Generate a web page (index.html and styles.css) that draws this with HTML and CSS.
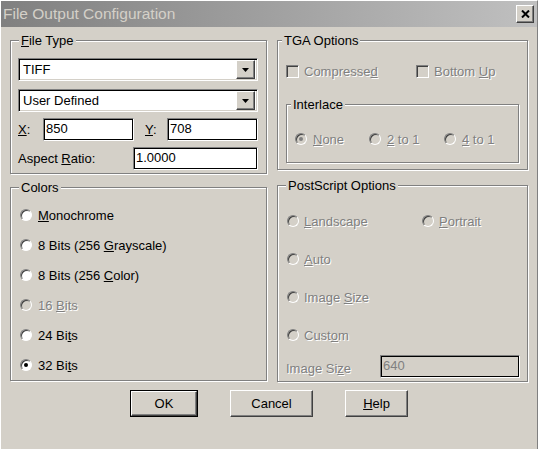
FILE: index.html
```html
<!DOCTYPE html>
<html>
<head>
<meta charset="utf-8">
<link rel="stylesheet" href="styles.css">
</head>
<body>
<div class="window">
  <div class="titlebar">
    <span class="title">File Output Configuration</span>
    <span class="close"><svg width="9" height="8" viewBox="0 0 9 8"><path d="M1 0.5 L8 7.5 M8 0.5 L1 7.5" stroke="#000" stroke-width="2"/></svg></span>
  </div>
  <div class="content">
    <div class="columns">
      <div class="col col-left">
        <div class="group filetype">
          <div class="legend"><u>F</u>ile Type</div>
          <div class="combo first"><span class="combo-text">TIFF</span><span class="combo-btn"><svg width="7" height="4" viewBox="0 0 7 4"><path d="M0 0H7L3.5 4Z" fill="#000"/></svg></span></div>
          <div class="combo second"><span class="combo-text">User Defined</span><span class="combo-btn"><svg width="7" height="4" viewBox="0 0 7 4"><path d="M0 0H7L3.5 4Z" fill="#000"/></svg></span></div>
          <div class="row xy">
            <span class="lbl lbl-x"><u>X</u>:</span>
            <span class="edit w91">850</span>
            <span class="lbl lbl-y"><u>Y</u>:</span>
            <span class="edit w91">708</span>
          </div>
          <div class="row aspect">
            <span class="lbl lbl-aspect">Aspect <u>R</u>atio:</span>
            <span class="edit w125">1.0000</span>
          </div>
        </div>
        <div class="group colors">
          <div class="legend">Colors</div>
          <div class="radio-list">
            <div class="ritem"><span class="radio"></span><span><u>M</u>onochrome</span></div>
            <div class="ritem"><span class="radio"></span><span>8 Bits (256 <u>G</u>rayscale)</span></div>
            <div class="ritem"><span class="radio"></span><span>8 Bits (256 <u>C</u>olor)</span></div>
            <div class="ritem disabled"><span class="radio"></span><span>16 <u>B</u>its</span></div>
            <div class="ritem"><span class="radio"></span><span>24 Bi<u>t</u>s</span></div>
            <div class="ritem"><span class="radio checked"></span><span>32 Bi<u>t</u>s</span></div>
          </div>
        </div>
      </div>
      <div class="col col-right">
        <div class="group tga">
          <div class="legend">TGA Options</div>
          <div class="check-row">
            <div class="citem c1 disabled"><span class="checkbox"></span><span>Compresse<u>d</u></span></div>
            <div class="citem disabled"><span class="checkbox"></span><span>Bottom <u>U</u>p</span></div>
          </div>
          <div class="group interlace">
            <div class="legend">Interlace</div>
            <div class="interlace-row">
              <div class="ritem disabled i1"><span class="radio checked"></span><span><u>N</u>one</span></div>
              <div class="ritem disabled i2"><span class="radio"></span><span><u>2</u> to 1</span></div>
              <div class="ritem disabled"><span class="radio"></span><span><u>4</u> to 1</span></div>
            </div>
          </div>
        </div>
        <div class="group ps">
          <div class="legend">PostScript Options</div>
          <div class="ps-list">
            <div class="ps-row">
              <div class="ritem disabled p1"><span class="radio"></span><span><u>L</u>andscape</span></div>
              <div class="ritem disabled"><span class="radio"></span><span><u>P</u>ortrait</span></div>
            </div>
            <div class="ps-row">
              <div class="ritem disabled"><span class="radio"></span><span><u>A</u>uto</span></div>
            </div>
            <div class="ps-row">
              <div class="ritem disabled"><span class="radio"></span><span>Image <u>S</u>ize</span></div>
            </div>
            <div class="ps-row">
              <div class="ritem disabled"><span class="radio"></span><span>Cust<u>o</u>m</span></div>
            </div>
          </div>
          <div class="row imgsize">
            <span class="lbl lbl-img disabled-text">Image Si<u>z</u>e</span>
            <span class="edit w140 edit-disabled">640</span>
          </div>
        </div>
      </div>
    </div>
    <div class="buttons">
      <div class="btn default"><span class="btn-inner">OK</span></div>
      <div class="btn cancel"><span class="btn-inner">Cancel</span></div>
      <div class="btn help"><span class="btn-inner"><u>H</u>elp</span></div>
    </div>
  </div>
</div>
</body>
</html>
```

FILE: styles.css
```css
* { box-sizing: border-box; }
html, body { margin: 0; padding: 0; }
body {
  width: 538px;
  height: 449px;
  overflow: hidden;
  background: #d4d0c8;
  font-family: "Liberation Sans", Arial, sans-serif;
  font-size: 13px;
  color: #000;
}
u { text-decoration: underline; text-underline-offset: 1px; }

.window {
  width: 538px;
  height: 449px;
  background: #d4d0c8;
  border-top: 1px solid #fff;
  border-left: 1px solid #fff;
  border-right: 1px solid #808080;
}

.titlebar {
  height: 26px;
  display: flex;
  align-items: center;
  padding: 0 3px 0 2px;
  background: linear-gradient(to right, #808080, #c0c0c0);
}
.title {
  color: #d4d0c8;
  font-size: 15.5px;
  line-height: 26px;
}
.close {
  margin-left: auto;
  width: 18px;
  height: 18px;
  display: flex;
  align-items: center;
  justify-content: center;
  background: #d4d0c8;
  border: 1px solid;
  border-color: #fff #404040 #404040 #fff;
  box-shadow: inset -1px -1px 0 #808080;
}

.content { padding: 13px 0 0 9px; }
.columns { display: flex; gap: 10px; align-items: flex-start; }
.col { display: flex; flex-direction: column; }
.col-left { width: 257px; }
.col-right { width: 251px; }

.group {
  border: 1px solid #808080;
  box-shadow: inset 1px 1px 0 #fff, 1px 1px 0 #fff;
}
.legend {
  width: fit-content;
  margin: -8px 0 0 1px;
  padding: 0 2px;
  line-height: 15px;
  background: #d4d0c8;
  color: #000;
}

/* File Type */
.filetype { padding: 0 8px 3px 7px; }
.combo {
  height: 23px;
  display: flex;
  align-items: center;
  background: #fff;
  border: 1px solid;
  border-color: #808080 #fff #fff #808080;
  box-shadow: inset 1px 1px 0 #000, inset -1px -1px 0 #d4d0c8;
  padding: 2px;
}
.combo.first { margin-top: 10px; }
.combo.second { margin-top: 8px; }
.combo-text { flex: 1; padding-left: 2px; line-height: 19px; }
.combo-btn {
  width: 19px;
  height: 19px;
  display: flex;
  align-items: center;
  justify-content: center;
  background: #d4d0c8;
  border: 1px solid;
  border-color: #fff #404040 #404040 #fff;
  box-shadow: inset -1px -1px 0 #808080;
}

.row { display: flex; align-items: center; }
.xy { margin-top: 6px; }
.aspect { margin-top: 6px; }
.lbl-x { width: 25px; }
.lbl-y { width: 22px; margin-left: 11px; }
.lbl-aspect { width: 115px; }

.edit {
  height: 23px;
  display: flex;
  align-items: center;
  background: #fff;
  border: 1px solid;
  border-color: #808080 #fff #fff #808080;
  box-shadow: inset 1px 1px 0 #000, inset -1px -1px 0 #000;
  padding: 0 3px 2px 2px;
}
.w91 { width: 91px; }
.w125 { width: 125px; }
.w140 { width: 140px; }
.edit-disabled {
  background: #d4d0c8;
  color: #808080;
}

/* radios */
.ritem { display: flex; align-items: center; gap: 6px; }
.radio {
  width: 12px;
  height: 12px;
  flex: none;
  border-radius: 50%;
  display: flex;
  align-items: center;
  justify-content: center;
  background: #fff;
  border: 1px solid;
  border-color: #808080 #fff #fff #808080;
  box-shadow: inset 1px 1px 0 #404040;
}
.radio.checked::after {
  content: "";
  width: 4px;
  height: 4px;
  border-radius: 50%;
  background: #000;
}
.disabled { color: #808080; text-shadow: 1px 1px 0 #fff; }
.disabled-text { color: #808080; text-shadow: 1px 1px 0 #fff; }
.disabled .radio { background: #d4d0c8; }
.disabled .radio.checked::after { background: #808080; box-shadow: none; }

.colors { margin-top: 13px; padding: 0 8px 0 7px; }
.radio-list { margin-top: 5px; display: flex; flex-direction: column; }
.colors .ritem { height: 30px; padding-left: 2px; }

/* TGA */
.tga { padding: 0 8px 6px 8px; }
.tga > .legend { margin-left: -4px; }
.check-row { margin-top: 13px; height: 20px; display: flex; align-items: center; }
.citem { display: flex; align-items: center; gap: 5px; }
.c1 { width: 130px; }
.checkbox {
  width: 13px;
  height: 13px;
  flex: none;
  background: #d4d0c8;
  border: 1px solid;
  border-color: #808080 #fff #fff #808080;
  box-shadow: inset 1px 1px 0 #404040;
}
.interlace { margin-top: 23px; padding: 0 8px 13px 8px; }
.interlace > .legend { margin-left: -4px; }
.interlace-row { margin-top: 17px; height: 20px; display: flex; align-items: center; }
.i1 { width: 74px; }
.i2 { width: 75px; }

/* PostScript */
.ps { margin-top: 15px; padding: 0 6px 3px 8px; }
.ps > .legend { margin-left: 0px; }
.ps-list { margin-top: 9px; display: flex; flex-direction: column; }
.ps-row { height: 38px; display: flex; align-items: center; padding-left: 1px; }
.p1 { width: 135px; gap: 5px; }
.ps .ritem { gap: 5px; }
.imgsize { margin-top: 1px; }
.lbl-img { width: 94px; padding-top: 4px; }

/* buttons */
.buttons { display: flex; gap: 32px; margin: 8px 0 0 120px; }
.btn {
  height: 27px;
  display: flex;
  background: #d4d0c8;
  border: 1px solid;
  border-color: #fff #404040 #404040 #fff;
  box-shadow: inset -1px -1px 0 #808080;
}
.btn-inner {
  flex: 1;
  display: flex;
  align-items: center;
  justify-content: center;
  padding-bottom: 1px;
}
.btn.default {
  width: 68px;
  border: 1px solid #000;
  box-shadow: none;
}
.btn.default .btn-inner {
  border: 1px solid;
  border-color: #fff #404040 #404040 #fff;
  box-shadow: inset -1px -1px 0 #808080;
}
.cancel { width: 83px; }
.help { width: 63px; }
```
